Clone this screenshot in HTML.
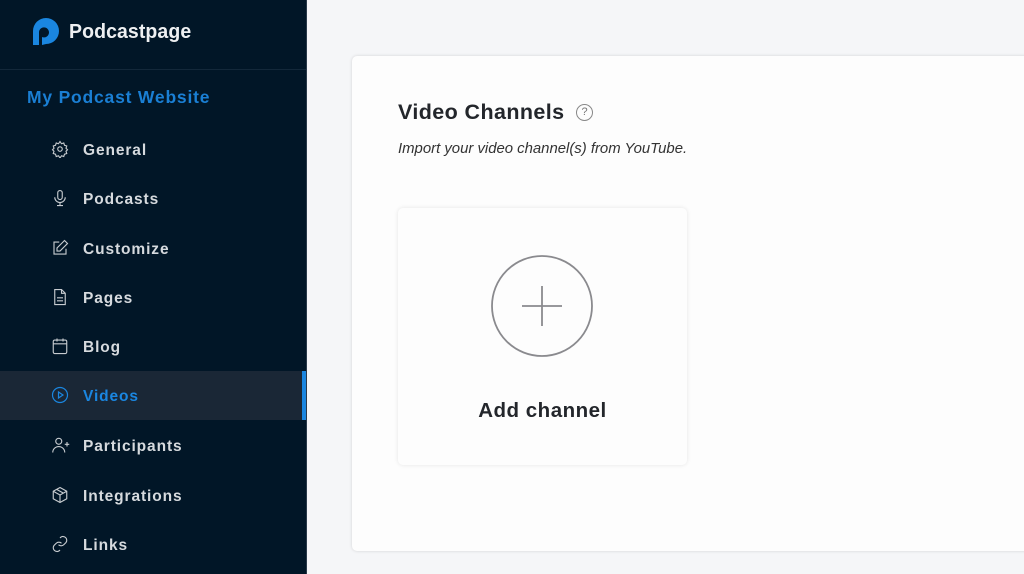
<!DOCTYPE html>
<html><head><style>
*{margin:0;padding:0;box-sizing:border-box}
body{width:1024px;height:574px;overflow:hidden;background:#f5f6f8;font-family:"Liberation Sans",sans-serif;position:relative}
.sb{position:absolute;left:0;top:0;width:307px;height:574px;background:#011627;border-right:1px solid #2a3a4a}
.logo{position:absolute;left:31px;top:17px;height:30px}
.logotext{position:absolute;left:69px;top:20px;color:#eef0f2;font-size:20.5px;font-weight:bold;letter-spacing:0.1px;transform:scaleX(0.95);transform-origin:left}
.hr{position:absolute;left:0;top:69px;width:306px;height:1px;background:#13283a}
.site{position:absolute;left:27px;top:87px;color:#1a7fd4;font-size:17.5px;font-weight:bold;letter-spacing:0.8px}
.item{position:absolute;left:0;width:306px;height:49px;color:#d6dade;font-size:15.5px;font-weight:bold;letter-spacing:0.9px}
.item span{position:absolute;left:83px;top:17px}
.item svg{position:absolute;left:51px;top:15px}
.item.act{background:#1a2736;color:#1a86e0}
.item.act:after{content:"";position:absolute;right:0;top:0;width:4px;height:49px;background:#1a86e0}
.card{position:absolute;left:352px;top:56px;width:700px;height:495px;background:#fdfdfd;border-radius:5px;box-shadow:0 0 3px rgba(0,0,0,.15)}
h1{position:absolute;left:398px;top:100px;font-size:21.5px;font-weight:bold;color:#23262b;letter-spacing:0.4px}
.q{position:absolute;left:576px;top:104px;width:17px;height:17px;border:1.3px solid #888;border-radius:50%;font-size:11px;color:#777;text-align:center;line-height:15px}
.sub{position:absolute;left:398px;top:141px;font-style:italic;font-size:14.9px;color:#333}
.add{position:absolute;left:398px;top:208px;width:289px;height:257px;background:#fdfdfd;border-radius:5px;box-shadow:0 0 4px rgba(0,0,0,.1)}
.add svg{position:absolute;left:93px;top:47px}
.add div{position:absolute;left:0;width:289px;top:191px;text-align:center;font-size:20.5px;font-weight:bold;color:#23262b;letter-spacing:0.5px}
</style></head><body>
<div class="sb">
<svg class="logo" width="32" height="30" viewBox="0 0 32 30"><path d="M2 28V14A13 13 0 1 1 15 27l-4 1V20a5 5 0 1 0-3-5v13z" fill="#1a86e0"/></svg>
<div class="logotext">Podcastpage</div>
<div class="hr"></div>
<div class="site">My Podcast Website</div>
<div class="item" style="top:125px"><svg width="18" height="18" viewBox="0 0 24 24" fill="none" stroke="#c8ccd0" stroke-width="1.5"><circle cx="12" cy="12" r="3"/><path d="M12 2l2 3 3-1 1 3 3 1-1 3 2 2-2 2 1 3-3 1-1 3-3-1-2 3-2-3-3 1-1-3-3-1 1-3-2-2 2-2-1-3 3-1 1-3 3 1z"/></svg><span>General</span></div>
<div class="item" style="top:174px"><svg width="18" height="18" viewBox="0 0 24 24" fill="none" stroke="#c8ccd0" stroke-width="1.5"><rect x="9" y="2" width="6" height="12" rx="3"/><path d="M5 11a7 7 0 0 0 14 0M12 18v4M8 22h8"/></svg><span>Podcasts</span></div>
<div class="item" style="top:224px"><svg width="18" height="18" viewBox="0 0 24 24" fill="none" stroke="#c8ccd0" stroke-width="1.5"><path d="M11 4H4v16h16v-7"/><path d="M18 2l4 4-10 10H8v-4z"/></svg><span>Customize</span></div>
<div class="item" style="top:273px"><svg width="18" height="18" viewBox="0 0 24 24" fill="none" stroke="#c8ccd0" stroke-width="1.5"><path d="M14 2H5v20h14V7zM14 2v5h5M8 13h8M8 17h8"/></svg><span>Pages</span></div>
<div class="item" style="top:322px"><svg width="18" height="18" viewBox="0 0 24 24" fill="none" stroke="#c8ccd0" stroke-width="1.5"><rect x="3" y="4" width="18" height="18" rx="2"/><path d="M3 9h18M8 2v4M16 2v4"/></svg><span>Blog</span></div>
<div class="item act" style="top:371px"><svg width="18" height="18" viewBox="0 0 24 24" fill="none" stroke="#1a86e0" stroke-width="1.6"><circle cx="12" cy="12" r="10"/><path d="M10 8l6 4-6 4z"/></svg><span>Videos</span></div>
<div class="item" style="top:421px"><svg width="20" height="18" viewBox="0 0 26 24" fill="none" stroke="#c8ccd0" stroke-width="1.5"><circle cx="10" cy="7" r="4"/><path d="M2 22a8 8 0 0 1 16 0M21 8v6M18 11h6"/></svg><span>Participants</span></div>
<div class="item" style="top:471px"><svg width="18" height="18" viewBox="0 0 24 24" fill="none" stroke="#c8ccd0" stroke-width="1.5"><path d="M12 2l9 5v10l-9 5-9-5V7zM3 7l9 5 9-5M12 12v10M7.5 4.5l9 5"/></svg><span>Integrations</span></div>
<div class="item" style="top:520px"><svg width="18" height="18" viewBox="0 0 24 24" fill="none" stroke="#c8ccd0" stroke-width="1.5"><path d="M10 13a5 5 0 0 0 7 0l3-3a5 5 0 0 0-7-7l-1 1M14 11a5 5 0 0 0-7 0l-3 3a5 5 0 0 0 7 7l1-1"/></svg><span>Links</span></div>
</div>
<div class="card"></div>
<h1>Video Channels</h1>
<div class="q">?</div>
<div class="sub">Import your video channel(s) from YouTube.</div>
<div class="add"><svg width="102" height="102" viewBox="0 0 102 102" fill="none" stroke="#8a8a8e" stroke-width="1.8"><circle cx="51" cy="51" r="50"/><path d="M51 31v40M31 51h40"/></svg><div>Add channel</div></div>
</body></html>
